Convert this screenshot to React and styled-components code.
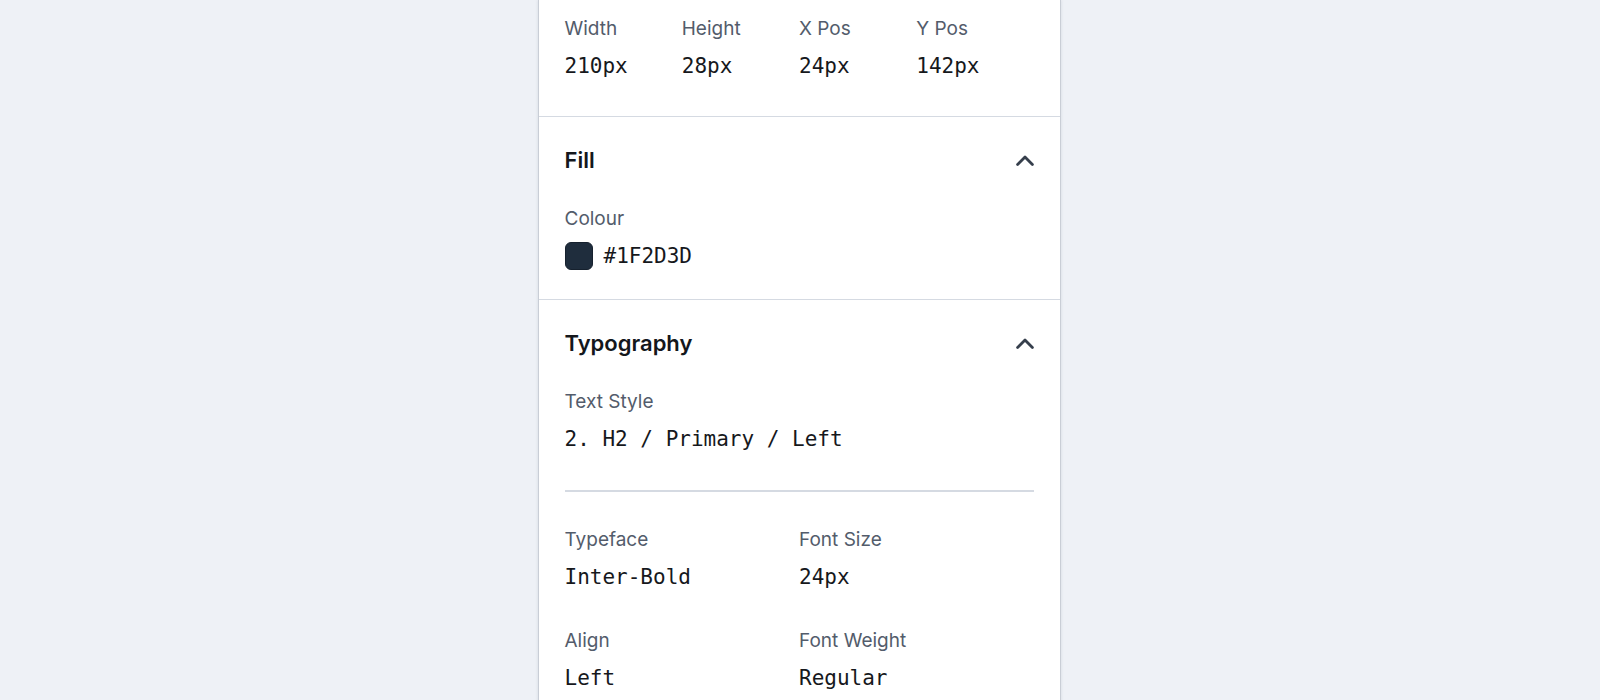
import styled, { createGlobalStyle } from "styled-components";

const GlobalStyle = createGlobalStyle`
    html, body {
        margin: 0;
        padding: 0;
        background: #eef1f6;
        font-family: Inter, "Noto Sans", sans-serif;
        -webkit-font-smoothing: antialiased;
    }
`

function ChevronUp(){
    return(
        <svg width="18" height="11" viewBox="0 0 18 11" fill="none">
            <path d="M1.6 9.4 L9 2 L16.4 9.4" stroke="#363f4c" strokeWidth="2.8" strokeLinecap="round" strokeLinejoin="round"/>
        </svg>
    )
}

function Field({label, children}){
    return(
        <FieldBox>
            <Label>{label}</Label>
            <Value>{children}</Value>
        </FieldBox>
    )
}

function Section({title, top, bottom, children}){
    return(
        <SectionBox top={top} bottom={bottom}>
            { title &&
                <SectionHeader>
                    <Title>{title}</Title>
                    <ChevronUp/>
                </SectionHeader>
            }
            {children}
        </SectionBox>
    )
}

function App(){
    return(
        <Page>
            <GlobalStyle/>
            <Panel>
                <Section top={15} bottom={36}>
                    <FieldGrid cols={4}>
                        <Field label="Width">210px</Field>
                        <Field label="Height">28px</Field>
                        <Field label="X Pos">24px</Field>
                        <Field label="Y Pos">142px</Field>
                    </FieldGrid>
                </Section>

                <Section title="Fill" top={28} bottom={29}>
                    <Field label="Colour">
                        <SwatchRow>
                            <Swatch color="#1f2d3d"/>
                            #1F2D3D
                        </SwatchRow>
                    </Field>
                </Section>

                <Section title="Typography" top={28} bottom={40}>
                    <Field label="Text Style">2. H2 / Primary / Left</Field>
                    <Rule/>
                    <FieldGrid cols={2}>
                        <Field label="Typeface">Inter-Bold</Field>
                        <Field label="Font Size">24px</Field>
                        <Field label="Align">Left</Field>
                        <Field label="Font Weight">Regular</Field>
                    </FieldGrid>
                </Section>
            </Panel>
        </Page>
    )
}

const Page = styled.div`
    height: 700px;
    overflow: hidden;
`
const Panel = styled.div`
    box-sizing: border-box;
    width: 523px;
    min-height: 700px;
    margin: 0 auto;
    transform: translateX(-1px);

    background: #ffffff;
    border-left: 1px solid #c9ced6;
    border-right: 1px solid #c9ced6;
    box-shadow: 0 0 3px rgba(40, 50, 70, 0.12);
`
const SectionBox = styled.section`
    padding: ${props=>props.top}px 26px ${props=>props.bottom}px;
    border-bottom: 1px solid #d5dae2;
`
const SectionHeader = styled.div`
    display: flex;
    justify-content: space-between;
    align-items: center;

    height: 30px;
    margin-bottom: 30px;
`
const Title = styled.h3`
    margin: 0;
    font-size: 22px;
    font-weight: 600;
    line-height: 30px;
    color: #14171c;
`
const FieldGrid = styled.div`
    display: grid;
    grid-template-columns: repeat(${props=>props.cols}, 1fr);
    row-gap: 36px;
`
const FieldBox = styled.div`
    display: flex;
    flex-direction: column;
    gap: 10px;
`
const Label = styled.div`
    padding-top: 1px;
    font-size: 19px;
    line-height: 26px;
    color: #535c6b;
`
const Value = styled.div`
    font-family: "DejaVu Sans Mono", "Liberation Mono", monospace;
    font-size: 21px;
    line-height: 28px;
    color: #16181c;
    white-space: nowrap;
`
const SwatchRow = styled.div`
    display: flex;
    align-items: center;
    gap: 11px;
`
const Swatch = styled.span`
    box-sizing: border-box;
    width: 28px;
    height: 28px;
    border-radius: 6px;
    background: ${props=>props.color};
    border: 1px solid #16212e;
`
const Rule = styled.div`
    height: 2px;
    background: #d5dae2;
    margin: 37px 0 34px;
`

export default App;
